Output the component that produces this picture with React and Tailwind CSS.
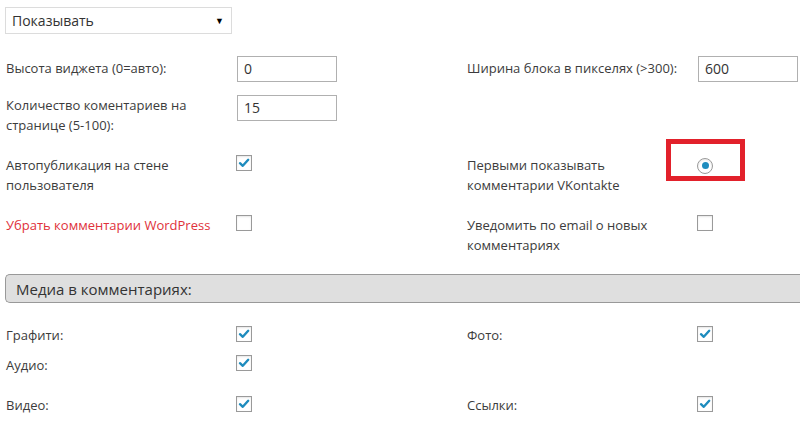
import React from 'react';

const font = { fontFamily: '"Open Sans", "Noto Sans", sans-serif' };

function Check({ checked }) {
  return (
    <span className="inline-flex w-4 h-4 items-center justify-center border border-[#9a9a9a] bg-white shadow-[inset_0_1px_2px_rgba(0,0,0,0.1)]">
      {checked && (
        <svg width="12" height="12" viewBox="0 0 12 12">
          <path d="M2 6.2 L4.8 8.8 L10.2 2.8" fill="none" stroke="#1e8cbe" strokeWidth="2.4" strokeLinecap="round" strokeLinejoin="round" />
        </svg>
      )}
    </span>
  );
}

function Radio() {
  return (
    <span className="inline-flex w-4 h-4 items-center justify-center rounded-full border border-[#9a9a9a] bg-white shadow-[inset_0_1px_2px_rgba(0,0,0,0.1)]">
      <span className="w-[7px] h-[7px] rounded-full bg-[#1e8cbe]" />
    </span>
  );
}

function TextBox({ value }) {
  return (
    <div className="w-[100px] h-[26px] border border-[#b0b0b0] bg-white pl-[6px] flex items-center text-[14px] text-[#333]">
      {value}
    </div>
  );
}

export default function App() {
  return (
    <div className="w-[800px] h-[430px] overflow-hidden bg-white text-[13px] leading-[20px] text-[#3c3c3c]" style={font}>
      {/* select */}
      <div className="ml-[5px] mt-[7px] w-[227px] h-[27px] border border-[#dcdcdc] flex items-center justify-between pl-[6px] pr-[7px] text-[14px] text-[#333]">
        <span>Показывать</span>
        <span className="text-[9px] text-black">▼</span>
      </div>

      {/* row 1 */}
      <div className="mt-[22px] grid grid-cols-[236px_231px_230px_1fr]">
        <div className="pl-[6px] pt-[2px]">Высота виджета (0=авто):</div>
        <div className="pl-[1px]"><TextBox value="0" /></div>
        <div className="pt-[2px]">Ширина блока в пикселях (&gt;300):</div>
        <div className="pl-[1px]"><TextBox value="600" /></div>
      </div>

      {/* row 2 */}
      <div className="mt-[13px] grid grid-cols-[236px_231px_230px_1fr]">
        <div className="pl-[6px] pr-[40px]">Количество коментариев на странице (5-100):</div>
        <div className="pl-[1px]"><TextBox value="15" /></div>
        <div />
        <div />
      </div>

      {/* row 3 */}
      <div className="mt-[20px] grid grid-cols-[236px_231px_230px_1fr]">
        <div className="pl-[6px] pr-[50px]">Автопубликация на стене пользователя</div>
        <div className="-mt-px"><Check checked /></div>
        <div className="pr-[40px]">Первыми показывать комментарии VKontakte</div>
        <div className="-mt-px">
          <div className="relative inline-block">
            <Radio />
            <div className="absolute left-[-31px] top-[-15px] w-[79px] h-[42px] border-[5px] border-[#e2212b]" />
          </div>
        </div>
      </div>

      {/* row 4 */}
      <div className="mt-[20px] grid grid-cols-[236px_231px_230px_1fr]">
        <div className="pl-[6px] text-[#e0313b]">Убрать комментарии WordPress</div>
        <div><Check /></div>
        <div className="pr-[40px]">Уведомить по email о новых комментариях</div>
        <div><Check /></div>
      </div>

      {/* section header */}
      <div className="mt-[19px] ml-[5px] h-[29px] border border-r-0 border-[#999] rounded-l-[5px] bg-[#dfdfdf] flex items-center pl-[10px] text-[15px] font-medium text-[#333]">
        Медиа в комментариях:
      </div>

      {/* media rows */}
      <div className="mt-[22px] grid grid-cols-[236px_231px_230px_1fr]">
        <div className="pl-[6px]">Графити:</div>
        <div><Check checked /></div>
        <div>Фото:</div>
        <div><Check checked /></div>
      </div>
      <div className="mt-[10px] grid grid-cols-[236px_231px_230px_1fr]">
        <div className="pl-[6px]">Аудио:</div>
        <div className="-mt-px"><Check checked /></div>
        <div />
        <div />
      </div>
      <div className="mt-[20px] grid grid-cols-[236px_231px_230px_1fr]">
        <div className="pl-[6px]">Видео:</div>
        <div><Check checked /></div>
        <div>Ссылки:</div>
        <div><Check checked /></div>
      </div>
    </div>
  );
}
